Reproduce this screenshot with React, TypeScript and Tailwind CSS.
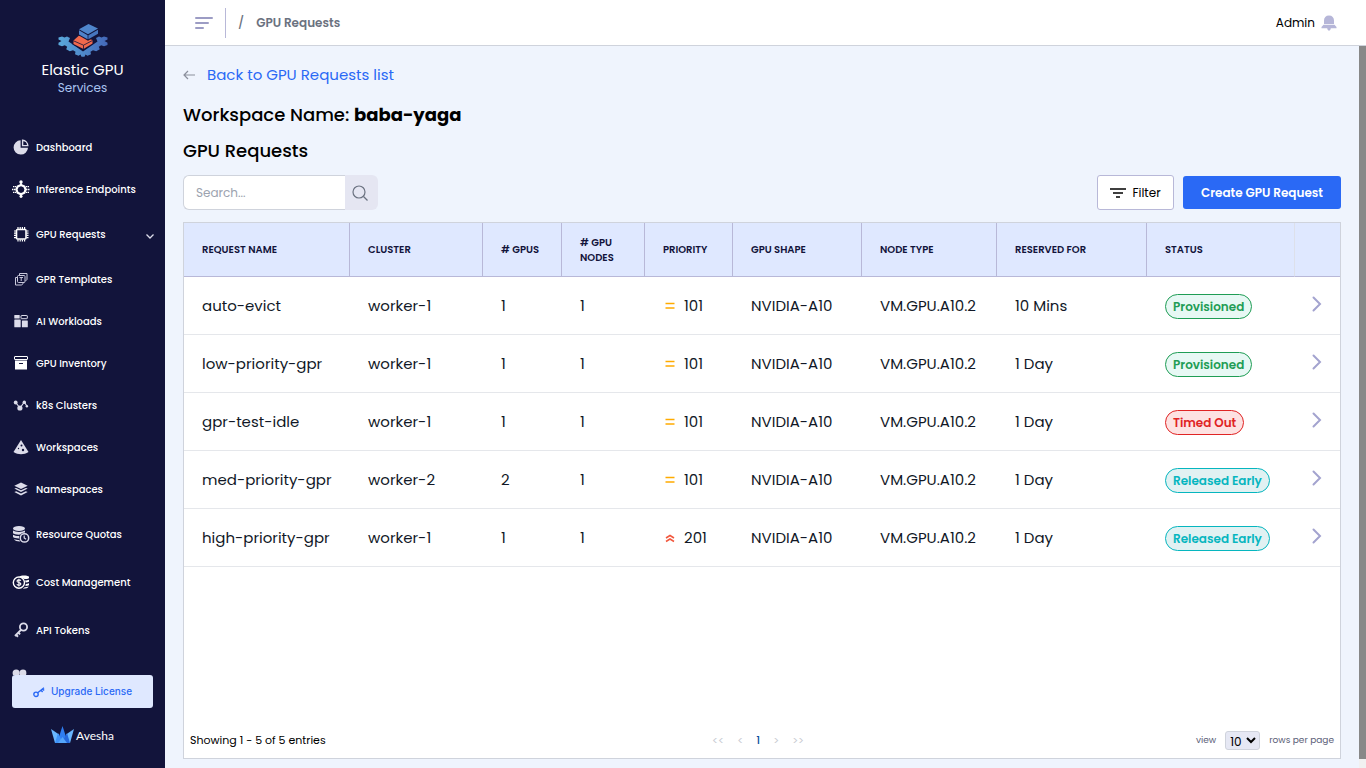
import { useState } from "react";
import type { ReactNode } from "react";
import clsx from "clsx";

interface NavItem {
    label: string;
    icon: ReactNode;
    tall?: boolean;
    expandable?: boolean;
}

interface GpuRequest {
    name: string;
    cluster: string;
    gpus: number;
    nodes: number;
    priority: number;
    shape: string;
    nodeType: string;
    reservedFor: string;
    status: "Provisioned" | "Timed Out" | "Released Early";
}

const requests: GpuRequest[] = [
    { name: "auto-evict", cluster: "worker-1", gpus: 1, nodes: 1, priority: 101, shape: "NVIDIA-A10", nodeType: "VM.GPU.A10.2", reservedFor: "10 Mins", status: "Provisioned" },
    { name: "low-priority-gpr", cluster: "worker-1", gpus: 1, nodes: 1, priority: 101, shape: "NVIDIA-A10", nodeType: "VM.GPU.A10.2", reservedFor: "1 Day", status: "Provisioned" },
    { name: "gpr-test-idle", cluster: "worker-1", gpus: 1, nodes: 1, priority: 101, shape: "NVIDIA-A10", nodeType: "VM.GPU.A10.2", reservedFor: "1 Day", status: "Timed Out" },
    { name: "med-priority-gpr", cluster: "worker-2", gpus: 2, nodes: 1, priority: 101, shape: "NVIDIA-A10", nodeType: "VM.GPU.A10.2", reservedFor: "1 Day", status: "Released Early" },
    { name: "high-priority-gpr", cluster: "worker-1", gpus: 1, nodes: 1, priority: 201, shape: "NVIDIA-A10", nodeType: "VM.GPU.A10.2", reservedFor: "1 Day", status: "Released Early" },
];

const columns = [
    { label: "Request Name", width: "w-[166px]" },
    { label: "Cluster", width: "w-[133px]" },
    { label: "# GPUs", width: "w-[79px]" },
    { label: "# GPU Nodes", width: "w-[83px]" },
    { label: "Priority", width: "w-[88px]" },
    { label: "GPU Shape", width: "w-[129px]" },
    { label: "Node Type", width: "w-[135px]" },
    { label: "Reserved For", width: "w-[150px]" },
    { label: "Status", width: "w-[148px]" },
];

const statusStyles = {
    "Provisioned": "border-[#1f9d55] bg-[#e7f8f4] text-[#1f9d55]",
    "Timed Out": "border-[#e02424] bg-[#fde2e2] text-[#e02424]",
    "Released Early": "border-[#06b6bf] bg-[#e1f1f2] text-[#06b6bf]",
};

function Icon({ children }: { children: ReactNode }) {
    return (
        <svg viewBox="0 0 18 18" className="size-[18px] shrink-0" fill="#dcdcea" aria-hidden="true">
            {children}
        </svg>
    );
}

const navItems: NavItem[] = [
    {
        label: "Dashboard",
        icon: (
            <Icon>
                <path d="M8.6 2.2A7.2 7.2 0 1 0 16 9.8H8.6z" />
                <path d="M10.6 2.2a5.6 5.6 0 0 1 5.2 5.4h-5.2z" fill="none" stroke="#dcdcea" strokeWidth="1.4" />
            </Icon>
        ),
    },
    {
        label: "Inference Endpoints",
        icon: (
            <Icon>
                <path d="M9 1v4M9 14v3.5" stroke="#fff" strokeWidth="1.6" />
                <path d="M9 5l3.4 1.6 1.2 2.9-1.2 3.3L9 14.3l-3.4-1.5-1.2-3.3 1.2-2.9z" fill="none" stroke="#fff" strokeWidth="2.2" />
                <circle cx="9" cy="2" r="1.7" fill="#fff" />
                <circle cx="9" cy="16.3" r="1.5" fill="#fff" />
                <path d="M0 9.5h4M1 6.6h3M1 12.4h3M14 9.5h4M14 6.6h3M14 12.4h3" stroke="#fff" strokeWidth="1.4" strokeDasharray="1.5 .5" />
            </Icon>
        ),
    },
    {
        label: "GPU Requests",
        tall: true,
        expandable: true,
        icon: (
            <Icon>
                <rect x="4.5" y="4.5" width="9.5" height="9.5" rx="1" fill="none" stroke="#fff" strokeWidth="1.6" />
                <path d="M6 2v2M8.2 2v2M10.4 2v2M12.6 2v2M6 14.5v2M8.2 14.5v2M10.4 14.5v2M12.6 14.5v2M2 6h2M2 8.2h2M2 10.4h2M2 12.6h2M14.5 6h2M14.5 8.2h2M14.5 10.4h2M14.5 12.6h2" stroke="#fff" strokeWidth="1.2" />
            </Icon>
        ),
    },
    {
        label: "GPR Templates",
        icon: (
            <Icon>
                <g fill="none" stroke="#c9c9dc">
                    <path d="M7.5 5V3.5H15V9c0 1-.5 1.5-1.500 1.500" />
                    <rect x="5.5" y="5.5" width="7.5" height="7" rx="1" />
                    <path d="M5 7.5H3.5V15H9c1.200 0 2-.8 2-2" />
                    <path d="M7.500 7.500h3.500M9.200 7.500v3.500" />
                </g>
            </Icon>
        ),
    },
    {
        label: "AI Workloads",
        icon: (
            <Icon>
                <rect x="2.3" y="3" width="5.4" height="3.5" rx=".5" />
                <rect x="9" y="3.5" width="6.3" height="3.2" rx=".5" fill="none" stroke="#dcdcea" />
                <rect x="2.3" y="7.6" width="6.4" height="7.6" rx=".5" />
                <rect x="9.9" y="8.6" width="5.9" height="6.6" rx=".5" />
            </Icon>
        ),
    },
    {
        label: "GPU Inventory",
        icon: (
            <Icon>
                <rect x="2.5" y="2.5" width="13" height="3" rx=".4" fill="none" stroke="#fff" />
                <path d="M3 6.5h12v9H3z" fill="#fff" />
                <path d="M7 9.5h4" stroke="#12143b" />
            </Icon>
        ),
    },
    {
        label: "k8s Clusters",
        icon: (
            <Icon>
                <path d="M3.7 6.500L8 12l4.300-6 2.500 4" fill="none" stroke="#dcdcea" strokeWidth="1.2" />
                <circle cx="3.7" cy="6.5" r="1.9" />
                <circle cx="7.9" cy="12" r="2.6" />
                <circle cx="12.3" cy="6.3" r="1.7" />
                <circle cx="14.9" cy="10.3" r="1.2" />
            </Icon>
        ),
    },
    {
        label: "Workspaces",
        icon: (
            <Icon>
                <path d="M9 2l7.5 12C12 17 6 17 1.5 14z" />
                <circle cx="9.5" cy="7.5" r="1" fill="#12143b" />
                <circle cx="11" cy="12" r="1.2" fill="#12143b" />
                <circle cx="6.5" cy="10.5" r=".7" fill="#12143b" />
            </Icon>
        ),
    },
    {
        label: "Namespaces",
        icon: (
            <Icon>
                <path d="M9 2.5l6.7 3.2L9 9 2.3 5.7z" />
                <path d="M2.3 8.6L4.2 8 9 10.3 13.8 8l1.9.6L9 12z" />
                <path d="M2.3 11.9l1.9-.7L9 13.5l4.8-2.3 1.9.7L9 15.500z" />
            </Icon>
        ),
    },
    {
        label: "Resource Quotas",
        tall: true,
        icon: (
            <Icon>
                <ellipse cx="7" cy="3.5" rx="6" ry="2.6" />
                <path d="M1 5.6c2.5 1.9 9.5 1.9 12 0v2c-2 .1-3.6.8-4.6 2C5 9.8 2 9.3 1 8.2z" />
                <path d="M1 9.8c1.5 1 4 1.3 6.3 1.2-.3.8-.4 1.7-.3 2.5-2.500 0-5-.4-6-1.400z" />
                <path d="M2 14c1.500.7 3.500 1 5.300 1l.8 1.400C5.500 16.500 3 16 2 14z" />
                <circle cx="12.5" cy="12.9" r="4.2" fill="#12143b" stroke="#dcdcea" strokeWidth="1.5" />
                <path d="M12.2 10.5V13l1.9 1.3" fill="none" stroke="#dcdcea" strokeWidth="1.2" />
            </Icon>
        ),
    },
    {
        label: "Cost Management",
        tall: true,
        icon: (
            <Icon>
                <path d="M7 3.5C9 2 15 2 17 3.5v1.700c-1.500.7-3 .9-4.500.8M13 7.500c1.500 0 3-.2 4-.7v2c-1 .5-2 .7-3.300.7zM13.800 10.900c1.200 0 2.300-.2 3.200-.6v1.900c-1 .6-2.200.8-3.600.8zM12.700 14.200c1.600 0 3-.2 4-.7-.5 1.500-3 2.200-6 2.200z" fill="#fff" />
                <circle cx="6.9" cy="9.6" r="5.6" fill="#12143b" stroke="#fff" strokeWidth="1.4" />
                <path d="M8.900 7.600C8 6.500 5 6.600 5 8.200c0 1.700 3.900.9 3.900 2.800 0 1.600-3.200 1.600-4.100.3M6.900 5.700v7.800" fill="none" stroke="#fff" strokeWidth="1.1" />
            </Icon>
        ),
    },
    {
        label: "API Tokens",
        tall: true,
        icon: (
            <Icon>
                <circle cx="11.5" cy="6" r="3.6" fill="none" stroke="#dcdcea" strokeWidth="1.8" />
                <path d="M9.2 8.6L3 15M4 13.8l2 1.9M6.3 11.5l1.8 1.8" fill="none" stroke="#dcdcea" strokeWidth="1.9" />
            </Icon>
        ),
    },
    {
        label: "Users",
        tall: true,
        icon: (
            <Icon>
                <circle cx="4.2" cy="4" r="3.6" />
                <circle cx="11" cy="4" r="3.4" />
                <path d="M0 14c0-7 9-7 9 0zM10 14c0-2-.4-3.500-1-4.500 3-2 7 0 7 4.500z" />
            </Icon>
        ),
    },
];

function ProductLogo() {
    return (
        <svg viewBox="0 0 50 34" className="h-[34px] w-[50px]" aria-hidden="true">
            <defs>
                <linearGradient id="gear" x1="0" x2="1">
                    <stop offset="0" stopColor="#5aa9dc" />
                    <stop offset="1" stopColor="#4468b8" />
                </linearGradient>
            </defs>
            <path
                d="M.5 13.5L4 12.500l2.500 1L9 12.500l3 1.500-1.500 3.500L25 27.500 39.500 17.500 38 14l3-1.500 2.500 1 2.500-1 3.500 1v2L46.500 17l3 1.800V21L46 22.300l-2.800-1-2.400 1.500 1 2.500-3.600 2-3.200-1-2.500 1.400.5 2.500-3.500 1.500-2-1.200-1 2.200h-3l-1-2.200-2 1.200-3.500-1.500.5-2.500-2.500-1.400-3.200 1-3.600-2 1-2.500-2.400-1.500-2.800 1L.5 21v-2.200l3-1.800-3-1.500z"
                fill="url(#gear)"
            />
            <path d="M21 11l14.500 4.500v4L25.500 26.300l-11-5.800v-4z" fill="#12143b" />
            <path d="M21 11.500l13.500 4.500v3.500L25.500 25l-10-5v-3.500z" fill="#f2694c" />
            <path d="M15.500 16.800l10 4.400 9-4.700M25.500 21.200V25" fill="none" stroke="#12143b" strokeWidth=".8" />
            <path d="M30.500-1L41 4.500v6L30 16.800l-10-5.800V5z" fill="#12143b" />
            <path d="M30.500 0l9.500 4.600-10 5.700-9-5z" fill="#4f86cc" />
            <path d="M21 6.300l8.600 4.900v4.100L21 10.400z" fill="#4f83ca" />
            <path d="M40 5.800l-9.600 5.400v4.100L40 9.800z" fill="#4676bf" />
        </svg>
    );
}

function AveshaMark() {
    return (
        <svg viewBox="0 0 23 18" className="h-[18px] w-[23px]" aria-hidden="true">
            <path d="M0 3l8 5.500L5.500 17H4z" fill="#69b7ff" />
            <path d="M23 3l-8 5.500 2.500 8.500H19z" fill="#69b7ff" />
            <path d="M11.500 0L17 17H6z" fill="#2f7df0" />
            <path d="M4 17L7 7l5 10z" fill="#3f92f7" />
            <path d="M19 17L16 7l-5 10z" fill="#2568db" />
            <path d="M11.500 11L16 17H7z" fill="#55a5fb" />
        </svg>
    );
}

function Sidebar() {
    return (
        <aside className="flex w-[165px] shrink-0 flex-col bg-[#12143b] text-white">
            <div className="flex flex-col items-center pt-6 pb-8">
                <ProductLogo />
                <div className="text-[15px] leading-6">Elastic GPU</div>
                <div className="text-xs leading-3 text-[#a9c3f0]">Services</div>
            </div>
            <nav className="min-h-0 flex-1 overflow-hidden">
                {navItems.map((item) => (
                    <a
                        key={item.label}
                        href="#"
                        className={clsx("flex items-center gap-1.5 pr-2.5 pl-3 text-[10px] font-medium", item.tall ? "h-12" : "h-[42px]")}
                    >
                        {item.icon}
                        <span className="flex-1 whitespace-nowrap">{item.label}</span>
                        {item.expandable && (
                            <svg viewBox="0 0 10 10" className="size-2.5 shrink-0" fill="none" stroke="#dcdcea" strokeWidth="1.3" aria-hidden="true">
                                <path d="M1.5 5.5L5 9l3.5-3.5" />
                            </svg>
                        )}
                    </a>
                ))}
            </nav>
            <div className="flex flex-col items-center gap-[18px] px-3 pb-6">
                <button type="button" className="flex h-[33px] w-full items-center justify-center gap-1.5 rounded-[3px] bg-[#dfe8ff] font-['Inter',sans-serif] text-[10px] font-medium text-[#2a69f5]">
                    <svg viewBox="0 0 12 12" className="size-3" fill="none" stroke="currentColor" strokeWidth="1.4" aria-hidden="true">
                        <circle cx="3" cy="8.3" r="2.2" />
                        <path d="M4.7 6.8L11 1.800M8 4l1.600 2M9.500 2.800l1.600 1.700" />
                    </svg>
                    Upgrade License
                </button>
                <a href="#" className="flex items-end gap-0.5">
                    <AveshaMark />
                    <span className="font-['Lato',sans-serif] text-xs leading-4">Avesha</span>
                </a>
            </div>
        </aside>
    );
}

function TopBar() {
    return (
        <header className="flex h-[46px] shrink-0 items-center border-b border-[#cfd3dc] bg-white pr-[29px] pl-[30px]">
            <button type="button" aria-label="Toggle menu">
                <svg viewBox="0 0 18 14" className="h-3.5 w-[18px]" stroke="#9c9cc4" strokeWidth="2" strokeLinecap="round" aria-hidden="true">
                    <path d="M1 2h16M1 7h12M1 12h7" />
                </svg>
            </button>
            <div className="ml-3 h-[30px] w-px bg-[#b8b8d8]" />
            <nav aria-label="Breadcrumb" className="ml-3 flex flex-1 items-center gap-3 text-xs font-semibold text-[#6b7280]">
                <span className="font-medium">/</span>
                <span>GPU Requests</span>
            </nav>
            <div className="flex items-center gap-1.5 text-xs text-black">
                <span>Admin</span>
                <button type="button" aria-label="Notifications">
                    <svg viewBox="0 0 16 16" className="size-4" fill="#b6b6d8" aria-hidden="true">
                        <path d="M8 .5c3.200 0 5 2 5 5V9H3V5.500c0-3 1.800-5 5-5zM2.500 9.800h11l2 2.200v1.200H.5V12zM6.300 13h3.400v1.300L8 16l-1.700-1.700z" />
                    </svg>
                </button>
            </div>
        </header>
    );
}

function PriorityIcon({ high }: { high: boolean }) {
    return (
        <svg viewBox="0 0 10 10" className="size-2.5 shrink-0" fill="none" stroke={high ? "#f2583e" : "#ffab00"} strokeWidth="1.5" aria-hidden="true">
            {high ? <path d="M1 4l4-2.500L9 4M1 7.500L5 5l4 2.500" /> : <path d="M.5 1.500h9M.5 6h9" />}
        </svg>
    );
}

function RequestsTable() {
    const cell = "border-b border-[#e5e7eb] pt-0.5 pl-[18px]";

    return (
        <table className="w-full table-fixed border-separate border-spacing-0 text-left">
            <thead>
                <tr className="h-[54px] bg-[#dfe8ff] text-[10px] leading-[15px] text-[#12143b] uppercase">
                    {columns.map((column) => (
                        <th
                            key={column.label}
                            scope="col"
                            className={clsx("border-r border-b border-b-[#b8b8d8] pr-3 pl-[18px] font-semibold", column.width, column.label === "Status" ? "border-r-[#dde0ea]" : "border-r-[#b8b8d8]")}
                        >
                            {column.label}
                        </th>
                    ))}
                    <th scope="col" aria-label="Details" className="w-[45px] border-b border-[#b8b8d8]" />
                </tr>
            </thead>
            <tbody>
                {requests.map((request) => (
                    <tr key={request.name} className="h-[58px] text-[15px] whitespace-nowrap text-[#111827]">
                        <td className={cell}>{request.name}</td>
                        <td className={cell}>{request.cluster}</td>
                        <td className={cell}>{request.gpus}</td>
                        <td className={cell}>{request.nodes}</td>
                        <td className={cell}>
                            <div className="flex items-center gap-[9px] pl-0.5">
                                <PriorityIcon high={request.priority > 200} />
                                {request.priority}
                            </div>
                        </td>
                        <td className={cell}>{request.shape}</td>
                        <td className={cell}>{request.nodeType}</td>
                        <td className={cell}>{request.reservedFor}</td>
                        <td className={cell}>
                            <div className="flex">
                                <span className={clsx("flex h-[25px] items-center rounded-full border px-[7px] text-xs font-semibold", statusStyles[request.status])}>
                                    {request.status}
                                </span>
                            </div>
                        </td>
                        <td className="border-b border-[#e5e7eb] pr-0.5 pb-1">
                            <button type="button" aria-label={`Open ${request.name}`} className="flex w-full justify-center">
                                <svg viewBox="0 0 16 16" className="size-4" fill="none" stroke="#a3a3cf" strokeWidth="2" strokeLinecap="round" aria-hidden="true">
                                    <path d="M4.500 1.500L11 8l-6.500 6.500" />
                                </svg>
                            </button>
                        </td>
                    </tr>
                ))}
            </tbody>
        </table>
    );
}

function Pagination() {
    const [rows, setRows] = useState("10");

    return (
        <footer className="grid grid-cols-3 items-center px-1.5 pb-2 text-[11px] text-black">
            <span>Showing 1 - 5 of 5 entries</span>
            <div className="flex items-center justify-center gap-[13px] pr-2 text-[#c9ccd3]">
                <button type="button" aria-label="First page">&lt;&lt;</button>
                <button type="button" aria-label="Previous page">&lt;</button>
                <button type="button" aria-current="page" className="font-medium text-[#0b4f9e]">1</button>
                <button type="button" aria-label="Next page">&gt;</button>
                <button type="button" aria-label="Last page">&gt;&gt;</button>
            </div>
            <div className="flex items-center justify-end text-[9px] text-[#5b6078]">
                <label htmlFor="rows">view</label>
                <select
                    id="rows"
                    value={rows}
                    onChange={(e) => setRows(e.target.value)}
                    className="mx-[9px] h-[19px] w-[35px] rounded-[3px] border border-[#cfd3dc] bg-[#e6e8f4] text-xs text-black"
                >
                    <option>10</option>
                    <option>20</option>
                    <option>50</option>
                </select>
                <span>rows per page</span>
            </div>
        </footer>
    );
}

export default function App() {
    const [search, setSearch] = useState("");

    return (
        <div className="flex h-screen bg-[#eff4fd] font-['Poppins','Inter',sans-serif]">
            <Sidebar />
            <div className="flex min-w-0 flex-1 flex-col">
                <TopBar />
                <div className="flex min-h-0 flex-1">
                    <main className="flex min-w-0 flex-1 flex-col px-[18px] pt-[17px] pb-[9px] text-black">
                        <a href="#" className="flex items-center gap-3 self-start text-[15px] leading-6 text-[#2a69f5]">
                            <svg viewBox="0 0 12 10" className="h-2.5 w-3" fill="none" stroke="#8b8f9c" strokeWidth="1.2" aria-hidden="true">
                                <path d="M12 5H1M5 1L1 5l4 4" />
                            </svg>
                            Back to GPU Requests list
                        </a>
                        <h1 className="mt-3.5 text-lg leading-7 font-medium">
                            Workspace Name: <strong className="font-bold">baba-yaga</strong>
                        </h1>
                        <h2 className="mt-2 text-lg leading-7 font-medium">GPU Requests</h2>
                        <div className="mt-2.5 flex items-center gap-[9px]">
                            <form role="search" className="mr-auto flex" onSubmit={(e) => e.preventDefault()}>
                                <input
                                    type="text"
                                    aria-label="Search"
                                    placeholder="Search..."
                                    value={search}
                                    onChange={(e) => setSearch(e.target.value)}
                                    className="h-[35px] w-[162px] rounded-l-md border border-r-0 border-[#cfd3dc] bg-white px-3 text-xs placeholder:text-[#9ca3af]"
                                />
                                <button type="submit" aria-label="Search" className="flex h-[35px] w-[33px] items-center rounded-r-md bg-[#e5e6f2] pl-[7px]">
                                    <svg viewBox="0 0 16 16" className="size-4" fill="none" stroke="#6b7280" strokeWidth="1.2" aria-hidden="true">
                                        <circle cx="7" cy="7" r="6" />
                                        <path d="M11.500 11.500l4 4" />
                                    </svg>
                                </button>
                            </form>
                            <button type="button" className="flex h-[35px] w-[77px] items-center justify-center gap-1.5 rounded-[3px] border border-[#b8b8d8] bg-white text-xs">
                                <svg viewBox="0 0 16 10" className="h-2.5 w-4" stroke="#000" strokeWidth="1.6" aria-hidden="true">
                                    <path d="M0 1h16M3 5h10M6 9h4" />
                                </svg>
                                Filter
                            </button>
                            <button type="button" className="h-[33px] w-[158px] rounded-[3px] bg-[#2a69f5] text-xs font-semibold text-white">
                                Create GPU Request
                            </button>
                        </div>
                        <section className="mt-3 flex min-h-0 flex-1 flex-col justify-between border border-[#cfd3dc] bg-white">
                            <RequestsTable />
                            <Pagination />
                        </section>
                    </main>
                    <div className="w-[7px] shrink-0 bg-[#f1f1f1] pb-[9px]" aria-hidden="true">
                        <div className="h-full bg-[#888888]" />
                    </div>
                </div>
            </div>
        </div>
    );
}
